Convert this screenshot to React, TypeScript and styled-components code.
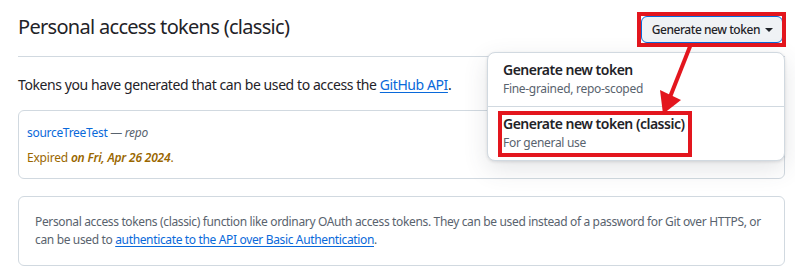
import React from "react";
import styled, { createGlobalStyle } from "styled-components";

const GlobalStyle = createGlobalStyle`
  body {
    margin: 0;
    background: #ffffff;
    font-family: "Noto Sans", "Liberation Sans", sans-serif;
    color: #1f2328;
  }
`;

const Page = styled.div`
  position: relative;
  padding: 0 10px 0 18px;
  width: 795px;
  height: 280px;
  box-sizing: border-box;
  overflow: hidden;
`;

const Header = styled.div`
  position: relative;
  display: flex;
  justify-content: space-between;
  align-items: flex-start;
  height: 57px;
  box-sizing: border-box;
  border-bottom: 1px solid #d1d9e0;
`;

const Title = styled.h2`
  margin: 12px 0 0;
  font-size: 20px;
  line-height: 30px;
  font-weight: 400;
  letter-spacing: -0.7px;
`;

const ButtonWrap = styled.div`
  position: relative;
  margin: 16px 2px 0 0;
`;

const Button = styled.button`
  display: flex;
  align-items: center;
  gap: 5px;
  height: 27px;
  padding: 0 9px 0 10px;
  border: 1px solid #0969da;
  border-radius: 6px;
  background: #eff2f5;
  color: #1f2328;
  font-family: inherit;
  font-size: 12px;
  font-weight: 500;
  letter-spacing: -0.45px;
`;

const Caret = styled.span`
  width: 0;
  height: 0;
  border-left: 4px solid transparent;
  border-right: 4px solid transparent;
  border-top: 4px solid #1f2328;
`;

const Highlight = styled.div<{ inset: string }>`
  position: absolute;
  inset: ${({ inset }) => inset};
  border: 4px solid #e3161e;
  box-sizing: border-box;
  pointer-events: none;
`;

const Menu = styled.div`
  position: absolute;
  right: 0;
  top: 52px;
  width: 298px;
  background: #ffffff;
  border: 1px solid #d1d9e0;
  border-radius: 8px;
  box-shadow: 0 1px 3px rgba(31, 35, 40, 0.12),
    0 8px 24px rgba(66, 74, 83, 0.14);
  box-sizing: border-box;
  z-index: 2;
`;

const MenuItem = styled.div<{ divider?: boolean }>`
  position: relative;
  padding: 7px 15px 8px;
  border-top: ${({ divider }) => (divider ? "1px solid #d1d9e0" : "none")};
`;

const MenuTitle = styled.div`
  font-size: 14px;
  line-height: 20px;
  font-weight: 600;
  letter-spacing: -0.5px;
`;

const MenuDesc = styled.div`
  font-size: 12px;
  line-height: 18px;
  color: #59636e;
  letter-spacing: -0.3px;
`;

const Intro = styled.p`
  margin: 18px 0 15px;
  font-size: 14px;
  line-height: 20px;
  letter-spacing: -0.42px;
`;

const Link = styled.a`
  color: #0969da;
  text-decoration: underline;
  text-underline-offset: 2px;
`;

const TokenCard = styled.div`
  border: 1px solid #d1d9e0;
  border-radius: 6px;
  padding: 12px 8px 11px;
`;

const TokenName = styled.div`
  font-size: 12px;
  line-height: 20px;
  color: #59636e;
  letter-spacing: -0.3px;
`;

const NameLink = styled.a`
  color: #0969da;
  text-decoration: none;
`;

const Scope = styled.em`
  color: #59636e;
`;

const Expiry = styled.div`
  margin-top: 6px;
  font-size: 12px;
  line-height: 18px;
  color: #9a6700;
  letter-spacing: -0.2px;

  em {
    font-weight: 600;
  }
`;

const InfoBox = styled.div`
  margin-top: 17px;
  border: 1px solid #d1d9e0;
  border-radius: 6px;
  padding: 16px;
  font-size: 12px;
  line-height: 18px;
  color: #59636e;
  letter-spacing: -0.35px;
`;

const Arrow = styled.svg`
  position: absolute;
  left: 640px;
  top: 36px;
  z-index: 3;
  overflow: visible;
`;

export default function App() {
  return (
    <>
      <GlobalStyle />
      <Page>
        <Header>
          <Title>Personal access tokens (classic)</Title>
          <ButtonWrap>
            <Button>
              Generate new token
              <Caret />
            </Button>
            <Highlight inset="-4px -3px -4px -4px" />
          </ButtonWrap>
          <Menu>
            <MenuItem>
              <MenuTitle>Generate new token</MenuTitle>
              <MenuDesc>Fine-grained, repo-scoped</MenuDesc>
            </MenuItem>
            <MenuItem divider>
              <MenuTitle>Generate new token (classic)</MenuTitle>
              <MenuDesc>For general use</MenuDesc>
              <Highlight inset="4px 92px 3px 10px" />
            </MenuItem>
          </Menu>
        </Header>

        <Intro>
          Tokens you have generated that can be used to access the{" "}
          <Link href="#">GitHub API</Link>.
        </Intro>

        <TokenCard>
          <TokenName>
            <NameLink href="#">sourceTreeTest</NameLink> — <Scope>repo</Scope>
          </TokenName>
          <Expiry>
            Expired <em>on Fri, Apr 26 2024</em>.
          </Expiry>
        </TokenCard>

        <InfoBox>
          Personal access tokens (classic) function like ordinary OAuth access
          tokens. They can be used instead of a password for Git over HTTPS, or
          can be used to{" "}
          <Link href="#">authenticate to the API over Basic Authentication</Link>
          .
        </InfoBox>

        <Arrow width="60" height="80" viewBox="640 36 60 80">
          <line
            x1="691"
            y1="44"
            x2="670"
            y2="97"
            stroke="#e3161e"
            strokeWidth="4"
          />
          <polygon points="660,90 681,100 663,114" fill="#e3161e" />
        </Arrow>
      </Page>
    </>
  );
}
